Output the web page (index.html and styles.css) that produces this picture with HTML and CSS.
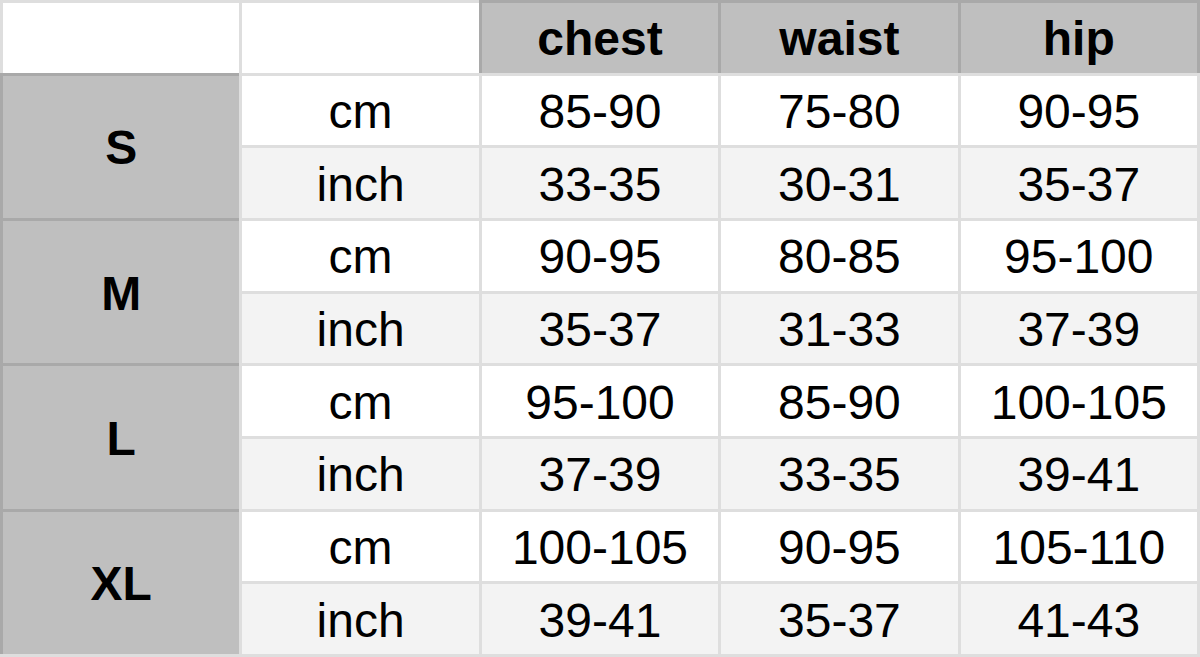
FILE: index.html
```html
<!DOCTYPE html>
<html>
<head>
<meta charset="utf-8">
<link rel="stylesheet" href="styles.css">
</head>
<body>
<div class="sheet">
  <div class="cell"></div>
  <div class="cell"></div>
  <div class="cell head">chest</div>
  <div class="cell head">waist</div>
  <div class="cell head last">hip</div>

  <div class="cell size">S</div>
  <div class="cell">cm</div><div class="cell">85-90</div><div class="cell">75-80</div><div class="cell">90-95</div>
  <div class="cell alt">inch</div><div class="cell alt">33-35</div><div class="cell alt">30-31</div><div class="cell alt">35-37</div>

  <div class="cell size">M</div>
  <div class="cell">cm</div><div class="cell">90-95</div><div class="cell">80-85</div><div class="cell">95-100</div>
  <div class="cell alt">inch</div><div class="cell alt">35-37</div><div class="cell alt">31-33</div><div class="cell alt">37-39</div>

  <div class="cell size">L</div>
  <div class="cell">cm</div><div class="cell">95-100</div><div class="cell">85-90</div><div class="cell">100-105</div>
  <div class="cell alt">inch</div><div class="cell alt">37-39</div><div class="cell alt">33-35</div><div class="cell alt">39-41</div>

  <div class="cell size">XL</div>
  <div class="cell">cm</div><div class="cell">100-105</div><div class="cell">90-95</div><div class="cell">105-110</div>
  <div class="cell alt">inch</div><div class="cell alt">39-41</div><div class="cell alt">35-37</div><div class="cell alt">41-43</div>
</div>
</body>
</html>
```
FILE: styles.css
```css
html, body {
  margin: 0;
  padding: 0;
  background: #ffffff;
}
.sheet {
  box-sizing: border-box;
  width: 1200px;
  height: 657px;
  padding: 3px;
  gap: 3px;
  background: #dedede;
  display: grid;
  grid-template-columns: repeat(5, 1fr);
  grid-template-rows: repeat(9, 1fr);
  font-family: "Liberation Sans", Arial, sans-serif;
  font-size: 48px;
  color: #000000;
}
.cell {
  background: #ffffff;
  display: flex;
  align-items: center;
  justify-content: center;
  padding-top: 3px;
  box-sizing: border-box;
  line-height: 1;
}
.alt {
  background: #f3f3f3;
}
.head {
  background: #bfbfbf;
  font-weight: bold;
  box-shadow: -3px 0 0 #a9a9a9, 0 -3px 0 #a9a9a9, -3px -3px 0 #a9a9a9;
}
.head.last {
  box-shadow: -3px 0 0 #a9a9a9, 0 -3px 0 #a9a9a9, -3px -3px 0 #a9a9a9, 3px 0 0 #a9a9a9, 3px -3px 0 #a9a9a9;
}
.size {
  grid-row: span 2;
  background: #bfbfbf;
  font-weight: bold;
  box-shadow: -3px 0 0 #a9a9a9, 0 -3px 0 #a9a9a9, -3px -3px 0 #a9a9a9;
}
```
